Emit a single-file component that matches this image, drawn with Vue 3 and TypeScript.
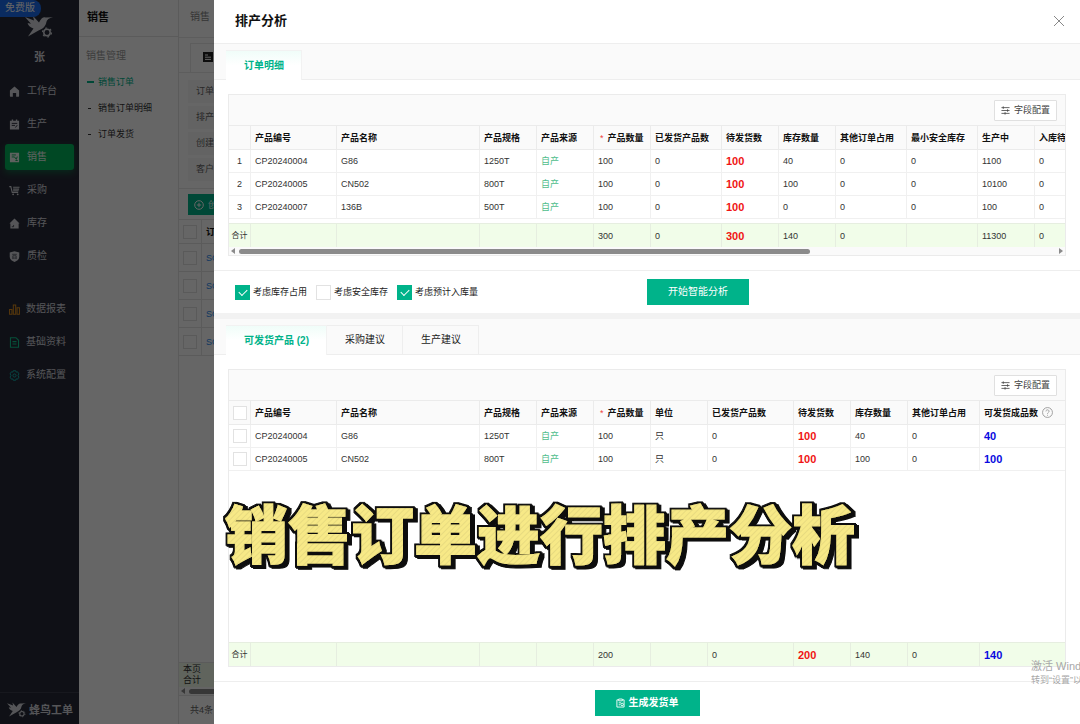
<script setup lang="ts">
import { ref } from 'vue'

interface Column {
  key: string
  label: string
  width?: number
  required?: boolean
  help?: boolean
  tone?: 'red' | 'blue' | 'source'
}
type Row = Record<string, string>

const mainMenu = [
  { label: '工作台', icon: 'home' },
  { label: '生产', icon: 'clip' },
  { label: '销售', icon: 'sale', active: true },
  { label: '采购', icon: 'cart' },
  { label: '库存', icon: 'store' },
  { label: '质检', icon: 'shield' },
]
const toolMenu = [
  { label: '数据报表', icon: 'chart' },
  { label: '基础资料', icon: 'doc' },
  { label: '系统配置', icon: 'gear' },
]
const subMenu = [
  { label: '销售订单', active: true },
  { label: '销售订单明细', active: false },
  { label: '订单发货', active: false },
]
const filters = ['订单', '排产', '创建', '客户']
const orders = ['SO1', 'SO2', 'SO3', 'SO4']

const detailColumns: Column[] = [
  { key: 'code', label: '产品编号', width: 86 },
  { key: 'name', label: '产品名称', width: 143 },
  { key: 'spec', label: '产品规格', width: 57 },
  { key: 'source', label: '产品来源', width: 57, tone: 'source' },
  { key: 'qty', label: '产品数量', width: 57, required: true },
  { key: 'sent', label: '已发货产品数', width: 71 },
  { key: 'wait', label: '待发货数', width: 57, tone: 'red' },
  { key: 'stock', label: '库存数量', width: 57 },
  { key: 'used', label: '其他订单占用', width: 71 },
  { key: 'safe', label: '最小安全库存', width: 71 },
  { key: 'making', label: '生产中', width: 57 },
  { key: 'inbound', label: '入库待检', width: 71 },
]
const detailRows: Row[] = [
  { code: 'CP20240004', name: 'G86', spec: '1250T', source: '自产', qty: '100', sent: '0', wait: '100', stock: '40', used: '0', safe: '0', making: '1100', inbound: '0' },
  { code: 'CP20240005', name: 'CN502', spec: '800T', source: '自产', qty: '100', sent: '0', wait: '100', stock: '100', used: '0', safe: '0', making: '10100', inbound: '0' },
  { code: 'CP20240007', name: '136B', spec: '500T', source: '自产', qty: '100', sent: '0', wait: '100', stock: '0', used: '0', safe: '0', making: '100', inbound: '0' },
]
const detailTotal: Row = { qty: '300', sent: '0', wait: '300', stock: '140', used: '0', making: '11300', inbound: '0' }

const shipColumns: Column[] = [
  { key: 'code', label: '产品编号', width: 86 },
  { key: 'name', label: '产品名称', width: 143 },
  { key: 'spec', label: '产品规格', width: 57 },
  { key: 'source', label: '产品来源', width: 57, tone: 'source' },
  { key: 'qty', label: '产品数量', width: 57, required: true },
  { key: 'unit', label: '单位', width: 57 },
  { key: 'sent', label: '已发货产品数', width: 86 },
  { key: 'wait', label: '待发货数', width: 57, tone: 'red' },
  { key: 'stock', label: '库存数量', width: 57 },
  { key: 'used', label: '其他订单占用', width: 72 },
  { key: 'ready', label: '可发货成品数', help: true, tone: 'blue' },
]
const shipRows: Row[] = [
  { code: 'CP20240004', name: 'G86', spec: '1250T', source: '自产', qty: '100', unit: '只', sent: '0', wait: '100', stock: '40', used: '0', ready: '40' },
  { code: 'CP20240005', name: 'CN502', spec: '800T', source: '自产', qty: '100', unit: '只', sent: '0', wait: '100', stock: '100', used: '0', ready: '100' },
]
const shipTotal: Row = { qty: '200', sent: '0', wait: '200', stock: '140', used: '0', ready: '140' }

const options = ref([
  { label: '考虑库存占用', on: true },
  { label: '考虑安全库存', on: false },
  { label: '考虑预计入库量', on: true },
])
const resultTabs = ['可发货产品 (2)', '采购建议', '生产建议']
const activeTab = ref(0)
</script>

<template>
  <div class="page">
    <svg class="defs" aria-hidden="true">
      <symbol id="bird" viewBox="0 0 28 22">
        <path d="M0 1 9 4.500 8 0l6 6.500C16 2.500 18 .8 20.500 1.400L28 1.200C24 2.200 21.800 3.600 21.400 6 20.800 10 18 13 13.500 14.500L3 20.500 8.500 12.500C5 11.500 3.200 9.500 2.600 7l3.400.8Z" fill="currentColor" />
        <circle cx="22" cy="16.500" r="3.200" fill="none" stroke="currentColor" stroke-width="1.500" />
        <circle cx="22" cy="16.500" r="4.500" fill="none" stroke="currentColor" stroke-width="1.200" stroke-dasharray="2 2.710" />
      </symbol>
      <symbol id="home" viewBox="0 0 12 12"><path d="M6 .5 11 5v6a.6.6 0 0 1-.6.6H7.800V7.500H4.200v4.100H1.600A.6.6 0 0 1 1 11V5Z" fill="currentColor" /></symbol>
      <symbol id="clip" viewBox="0 0 12 12"><path d="M1 1.800h2V.5h1.500v1.300h3V.5H9v1.300h2v9.700H1Z" fill="currentColor" /><path d="M3 4.800h6M3 7h3.500M7 9.300l2-2.600" stroke="#262a37" fill="none" /></symbol>
      <symbol id="sale" viewBox="0 0 12 12"><path d="M1 .8h10v10.400H1Z" fill="currentColor" /><path d="M3 3.200h4.500M3 5.400h3l2 2.600 1-3" stroke="#00a050" fill="none" /><path d="M7 9.300h2.500" stroke="#00a050" /></symbol>
      <symbol id="cart" viewBox="0 0 12 12"><path d="M.3 1.800H2L3.500 8H10M4.500 2.500h7M4.500 4.500H11M4.500 6.300h6" fill="none" stroke="currentColor" stroke-width="1.200" /><circle cx="4.500" cy="10.200" r="1" fill="currentColor" /><circle cx="9.500" cy="10.200" r="1" fill="currentColor" /></symbol>
      <symbol id="store" viewBox="0 0 12 12"><path d="M6 .6 11.500 6H10.500v5.400h-9V6H.5Z" fill="currentColor" /><path d="M3 9.500h2V7.600" stroke="#262a37" stroke-width=".8" fill="none" /></symbol>
      <symbol id="shield" viewBox="0 0 12 12"><path d="M6 .3 11.200 1.700v4.500C11.200 9 9 10.800 6 11.900 3 10.800.8 9 .8 6.200V1.700Z" fill="currentColor" /><path d="M3.500 3.600h5M4.200 5.200h3.600v2.500H4.200zM4.500 7.800l-1 1M7.500 7.800l1 1" stroke="#262a37" stroke-width=".7" fill="none" /></symbol>
      <symbol id="chart" viewBox="0 0 12 12"><path d="M.6 6h2.600v5.200H.6zM4.700 1.200h2.600v10H4.700zM8.800 4h2.600v7.200H8.800z" fill="none" stroke="currentColor" stroke-width="1.100" /></symbol>
      <symbol id="doc" viewBox="0 0 12 12"><path d="M1.600.8h6L10.400 3.600v7.600H1.600zM3.800 5h4.400M3.800 7.600h4.400" fill="none" stroke="currentColor" stroke-width="1.200" /></symbol>
      <symbol id="gear" viewBox="0 0 12 12"><path d="M4.700.8h2.600l.5 1.500 1.600-.3 1.400 2.200L9.900 6l.9 1.800L9.400 10l-1.600-.3-.5 1.500H4.700l-.5-1.500-1.600.3-1.400-2.200L2.100 6l-.9-1.800L2.600 2l1.600.3Z" fill="none" stroke="currentColor" stroke-linejoin="round" /><circle cx="6" cy="6" r="1.700" fill="none" stroke="currentColor" /></symbol>
      <symbol id="sliders" viewBox="0 0 10 10"><path d="M.5 1.800h9M.5 5h9M.5 8.200h9M2.500.4v2.800M7.300 3.600v2.800M4.500 6.800v2.800" fill="none" stroke="currentColor" stroke-width=".9" /></symbol>
    </svg>

    <nav class="sidebar">
      <span class="badge">免费版</span>
      <svg class="logo"><use href="#bird" /></svg>
      <div class="user">张</div>
      <ul class="menu">
        <li v-for="item in mainMenu" :key="item.label">
          <a href="#" class="menu-link" :class="{ active: item.active }">
            <svg class="icon"><use :href="'#' + item.icon" /></svg>{{ item.label }}
          </a>
        </li>
      </ul>
      <ul class="menu tools">
        <li v-for="item in toolMenu" :key="item.label">
          <a href="#" class="menu-link">
            <svg class="icon" :class="item.icon"><use :href="'#' + item.icon" /></svg>{{ item.label }}
          </a>
        </li>
      </ul>
      <div class="brand"><svg class="brand-logo"><use href="#bird" /></svg>蜂鸟工单</div>
    </nav>

    <aside class="submenu">
      <h2>销售</h2>
      <p class="group">销售管理</p>
      <a v-for="item in subMenu" :key="item.label" href="#" :class="{ active: item.active }">{{ item.label }}</a>
    </aside>

    <main class="orders">
      <div class="crumb">销售</div>
      <div class="view-tabs">
        <div class="view-tab">
          <svg class="view-icon" viewBox="0 0 10 10"><path d="M0 0h10v10H0z" fill="#222" /><path d="M2 3h3M2 5.200h6M2 7.400h6" stroke="#fff" /></svg>
        </div>
      </div>
      <div class="filters"><span v-for="f in filters" :key="f">{{ f }}</span></div>
      <div class="actions">
        <button type="button" class="create">
          <svg class="plus" viewBox="0 0 10 10"><circle cx="5" cy="5" r="4.300" /><path d="M5 2.800v4.400M2.800 5h4.400" /></svg>创建
        </button>
      </div>
      <table class="order-table">
        <thead>
          <tr><th class="pick"><input type="checkbox" class="check" aria-label="全选订单" /></th><th>订单</th></tr>
        </thead>
        <tbody>
          <tr v-for="o in orders" :key="o">
            <td class="pick"><input type="checkbox" class="check" :aria-label="o" /></td>
            <td><a href="#">{{ o }}</a></td>
          </tr>
        </tbody>
      </table>
      <div class="order-total"><span>本页<br />合计</span></div>
      <div class="scroll"><i class="arrow left"></i><i class="thumb"></i></div>
      <div class="pager">共4条</div>
    </main>

    <div class="mask"></div>

    <section class="drawer" role="dialog" aria-labelledby="drawer-title">
      <header class="drawer-head">
        <h1 id="drawer-title">排产分析</h1>
        <button type="button" class="close" aria-label="关闭">
          <svg viewBox="0 0 12 12"><path d="M1 1l10 10M11 1 1 11" /></svg>
        </button>
      </header>

      <div class="tabs" role="tablist"><button type="button" role="tab" class="tab active">订单明细</button></div>

      <div class="panel detail">
        <div class="grid-box">
          <div class="toolbar"><button type="button" class="config"><svg><use href="#sliders" /></svg>字段配置</button></div>
          <div class="clip">
            <table class="grid wide">
              <colgroup><col class="lead" /><col v-for="c in detailColumns" :key="c.key" :style="{ width: c.width + 'px' }" /></colgroup>
              <thead>
                <tr>
                  <th></th>
                  <th v-for="c in detailColumns" :key="c.key"><span v-if="c.required" class="star">*</span>{{ c.label }}</th>
                </tr>
              </thead>
              <tbody>
                <tr v-for="(r, i) in detailRows" :key="r.code">
                  <td class="num">{{ i + 1 }}</td>
                  <td v-for="c in detailColumns" :key="c.key" :class="c.tone">{{ r[c.key] }}</td>
                </tr>
              </tbody>
              <tbody class="spacer"><tr><td :colspan="detailColumns.length + 1"></td></tr></tbody>
              <tfoot>
                <tr>
                  <td class="sum">合计</td>
                  <td v-for="c in detailColumns" :key="c.key" :class="c.tone">{{ detailTotal[c.key] }}</td>
                </tr>
              </tfoot>
            </table>
          </div>
          <div class="scroll"><i class="arrow left"></i><div class="track"><i class="thumb"></i></div><i class="arrow right"></i></div>
        </div>
      </div>

      <div class="options">
        <div class="checks">
          <label v-for="o in options" :key="o.label"><input v-model="o.on" type="checkbox" class="check" />{{ o.label }}</label>
        </div>
        <div><button type="button" class="primary">开始智能分析</button></div>
      </div>

      <div class="tabs second" role="tablist">
        <button v-for="(t, i) in resultTabs" :key="t" type="button" role="tab" class="tab" :class="{ active: i === activeTab }" @click="activeTab = i">{{ t }}</button>
      </div>

      <div class="panel result">
        <div class="grid-box grow">
          <div class="toolbar"><button type="button" class="config"><svg><use href="#sliders" /></svg>字段配置</button></div>
          <table class="grid">
            <colgroup><col class="lead" /><col v-for="c in shipColumns" :key="c.key" :style="c.width ? { width: c.width + 'px' } : {}" /></colgroup>
            <thead>
              <tr>
                <th class="num"><input type="checkbox" class="check" aria-label="全选产品" /></th>
                <th v-for="c in shipColumns" :key="c.key"><span v-if="c.required" class="star">*</span>{{ c.label }}<svg v-if="c.help" class="help" viewBox="0 0 12 12"><circle cx="6" cy="6" r="5.400" /><path d="M4.300 4.800C4.300 2.500 7.700 2.600 7.700 4.700 7.700 6 6 6 6 7.400M6 8.500v1" /></svg></th>
              </tr>
            </thead>
            <tbody>
              <tr v-for="r in shipRows" :key="r.code">
                <td class="num"><input type="checkbox" class="check" :aria-label="r.code" /></td>
                <td v-for="c in shipColumns" :key="c.key" :class="c.tone">{{ r[c.key] }}</td>
              </tr>
            </tbody>
          </table>
          <div class="blank">
            <svg class="caption" viewBox="0 0 640 84" role="img" aria-label="销售订单进行排产分析">
              <defs>
                <pattern id="hatch" width="4" height="4" patternUnits="userSpaceOnUse" patternTransform="rotate(45)">
                  <path d="M0 0h4v4H0z" fill="#f7e987" /><path d="M0 0h1v4H0z" fill="#e8db80" />
                </pattern>
                <filter id="outline" x="-2%" y="-20%" width="104%" height="140%">
                  <feMorphology in="SourceAlpha" operator="dilate" radius="1.500" result="edge" />
                  <feOffset in="edge" dx="1" dy="1" result="s1" />
                  <feOffset in="edge" dx="3" dy="2" result="s2" />
                  <feMerge result="dark"><feMergeNode in="s2" /><feMergeNode in="s1" /><feMergeNode in="edge" /></feMerge>
                  <feFlood flood-color="#0c0c0c" />
                  <feComposite in2="dark" operator="in" result="ink" />
                  <feMerge><feMergeNode in="ink" /><feMergeNode in="SourceGraphic" /></feMerge>
                </filter>
              </defs>
              <text x="4" y="64" filter="url(#outline)">销售订单进行排产分析</text>
            </svg>
          </div>
          <table class="grid">
            <colgroup><col class="lead" /><col v-for="c in shipColumns" :key="c.key" :style="c.width ? { width: c.width + 'px' } : {}" /></colgroup>
            <tfoot>
              <tr>
                <td class="sum">合计</td>
                <td v-for="c in shipColumns" :key="c.key" :class="c.tone">{{ shipTotal[c.key] }}</td>
              </tr>
            </tfoot>
          </table>
        </div>
      </div>

      <footer class="drawer-foot">
        <button type="button" class="primary generate">
          <svg viewBox="0 0 10 10"><path d="M3 1.500H1v8h8v-8H7M3 .6h4v2H3zM3 4.800h2.500M3 7h1.500" /><circle cx="6.800" cy="6.600" r="1.400" /></svg>生成发货单
        </button>
      </footer>

      <div class="watermark"><p>激活 Windows</p><p class="small">转到“设置”以激活 Windows。</p></div>
    </section>
  </div>
</template>

<style>
body {
  margin: 0;
}
</style>

<style scoped>
.page {
  position: relative;
  display: grid;
  grid-template-columns: 79px 100px 1fr;
  min-height: 100vh;
  overflow: hidden;
  background: #fff;
  color: #333;
  font-family: "Liberation Sans", "Noto Sans CJK SC", sans-serif;
  font-size: 9px;
  line-height: 14px;
}
.page * {
  box-sizing: border-box;
}
.defs {
  position: absolute;
  width: 0;
  height: 0;
}
button {
  border: 0;
  padding: 0;
  margin: 0;
  background: none;
  color: inherit;
  font: inherit;
  white-space: nowrap;
}
a {
  color: inherit;
  text-decoration: none;
}
h1, h2, p, ul {
  margin: 0;
  padding: 0;
}
ul {
  list-style: none;
}

/* left navigation */
.sidebar {
  position: relative;
  display: flex;
  flex-direction: column;
  background: #262a37;
  color: #d4d5dc;
  font-size: 10px;
}
.badge {
  position: absolute;
  left: 0;
  top: 0;
  width: 41px;
  height: 17px;
  padding-left: 5px;
  border-radius: 0 8px 8px 0;
  background: #1a6cf0;
  color: #fff;
  line-height: 16px;
}
.logo {
  width: 28px;
  height: 22px;
  margin: 16px 0 0 25px;
  flex: none;
}
.user {
  height: 36px;
  padding-top: 12px;
  text-align: center;
  font-size: 11px;
  font-weight: bold;
}
.menu {
  padding: 0 5px;
  display: grid;
  gap: 7px;
  margin-top: 4px;
}
.menu.tools {
  margin-top: 27px;
}
.menu-link {
  display: flex;
  align-items: center;
  gap: 7px;
  height: 26px;
  padding-left: 4px;
  border-radius: 3px;
  white-space: nowrap;
}
.tools .menu-link {
  gap: 6px;
}
.menu-link.active {
  background: #00b45a;
  color: #e8f5ee;
  box-shadow: 0 3px 6px #00b45a66;
}
.icon {
  width: 11px;
  height: 11px;
  flex: none;
}
.icon.chart {
  color: #d98a1e;
}
.icon.doc {
  color: #10c590;
}
.icon.gear {
  color: #10b5b0;
}
.brand {
  display: flex;
  align-items: center;
  gap: 3px;
  height: 32px;
  margin-top: auto;
  padding: 3px 0 0 7px;
  border-top: 1px solid #3a3e4c;
  font-size: 11px;
  font-weight: bold;
  white-space: nowrap;
}
.brand-logo {
  width: 19px;
  height: 16px;
  flex: none;
}

/* second level navigation */
.submenu {
  display: flex;
  flex-direction: column;
  border-right: 1px solid #e4e4e4;
}
.submenu h2 {
  height: 37px;
  padding-left: 8px;
  border-bottom: 1px solid #e4e4e4;
  color: #111;
  font-size: 11px;
  line-height: 35px;
}
.group {
  height: 32px;
  padding: 12px 0 0 7px;
  color: #999;
  font-size: 10px;
}
.submenu a {
  display: flex;
  align-items: center;
  gap: 7px;
  height: 26px;
  padding-left: 9px;
  white-space: nowrap;
}
.submenu a::before {
  content: "";
  width: 3px;
  height: 1px;
  background: #333;
}
.submenu a.active {
  gap: 4px;
  padding-left: 8px;
  color: #00b38a;
}
.submenu a.active::before {
  width: 7px;
  height: 2px;
  background: #00b38a;
}

/* order list behind the drawer */
.orders {
  display: flex;
  flex-direction: column;
  min-width: 0;
}
.crumb {
  height: 38px;
  padding-left: 11px;
  border-bottom: 1px solid #e8e8e8;
  color: #888;
  font-size: 10px;
  line-height: 34px;
}
.view-tabs {
  padding: 5px 11px 0;
  border-bottom: 1px solid #e8e8e8;
}
.view-tab {
  height: 29px;
  padding: 8px 12px;
  border: 1px solid #e8e8e8;
  border-bottom: 0;
}
.view-icon {
  display: block;
  width: 10px;
  height: 10px;
}
.filters {
  display: grid;
  gap: 3px;
  padding: 7px 9px;
  border-bottom: 1px solid #e8e8e8;
}
.filters span {
  height: 23px;
  padding: 4px 8px;
  background: #f8f8f8;
  color: #666;
}
.actions {
  padding: 5px 9px 4px;
}
.create {
  display: flex;
  align-items: center;
  gap: 4px;
  height: 21px;
  padding: 0 6px;
  background: #00b38a;
  color: #fff;
}
.plus {
  width: 10px;
  height: 10px;
  fill: none;
  stroke: currentColor;
}
.order-table {
  border-spacing: 0;
  border-top: 1px solid #e4e4e4;
}
.order-table th, .order-table td {
  height: 28px;
  padding: 0 4px;
  border-bottom: 1px solid #e4e4e4;
  text-align: left;
}
.order-table th {
  height: 24px;
  color: #111;
}
.order-table a {
  color: #2d8cf0;
}
.order-table .pick {
  width: 23px;
  border-right: 1px solid #e4e4e4;
}
.order-total {
  margin-top: auto;
  padding: 1px 4px;
  background: #f0fbe8;
  border-top: 1px solid #e4e4e4;
  line-height: 11px;
}
.orders .thumb {
  width: 300px;
}
.pager {
  height: 29px;
  padding-left: 11px;
  border-top: 1px solid #e4e4e4;
  color: #666;
  line-height: 28px;
}

.mask {
  position: absolute;
  inset: 0;
  background: rgba(0, 0, 0, 0.6);
}

/* drawer */
.drawer {
  position: absolute;
  inset: 0 0 0 214px;
  display: flex;
  flex-direction: column;
  overflow: hidden;
  background: #fff;
}
.drawer-head {
  display: flex;
  align-items: center;
  justify-content: space-between;
  height: 44px;
  padding: 0 15px 2px 21px;
  border-bottom: 1px solid #eee;
}
.drawer-head h1 {
  color: #111;
  font-size: 13px;
  line-height: 20px;
}
.close svg {
  display: block;
  width: 12px;
  height: 12px;
  fill: none;
  stroke: #888;
}
.tabs {
  display: flex;
  align-items: flex-end;
  height: 36px;
  padding-left: 12px;
  border-bottom: 1px solid #eee;
  background: #fafafa;
}
.tabs.second {
  box-sizing: content-box;
  height: 35px;
  border-top: 6px solid #f2f2f2;
}
.tab {
  height: 29px;
  padding: 0 17px 0 18px;
  border: solid #eee;
  border-width: 1px 1px 0 0;
  color: #222;
  font-size: 10px;
  line-height: 28px;
}
.tab.active {
  height: 30px;
  margin-bottom: -1px;
  border-color: #f2f2f2;
  background: linear-gradient(#f0fdf9, #fff 50%);
  color: #00b38a;
  font-weight: bold;
}
.panel {
  padding: 14px;
}
.detail {
  border-bottom: 1px solid #eee;
}
.result {
  display: flex;
  flex: 1;
  flex-direction: column;
  min-height: 0;
}
.grid-box {
  border: 1px solid #ebebeb;
}
.grid-box.grow {
  display: flex;
  flex: 1;
  flex-direction: column;
}
.toolbar {
  display: flex;
  align-items: center;
  justify-content: flex-end;
  height: 31px;
  padding-right: 8px;
  border-bottom: 1px solid #ebebeb;
  background: #fafafa;
}
.config {
  display: flex;
  align-items: center;
  justify-content: center;
  gap: 4px;
  width: 63px;
  height: 21px;
  border: 1px solid #e0e0e0;
  border-radius: 1px;
  background: #fff;
  color: #444;
}
.config svg {
  width: 9px;
  height: 9px;
}
.clip {
  overflow: hidden;
}
.grid {
  width: 100%;
  border-spacing: 0;
  table-layout: fixed;
}
.grid.wide {
  width: 877px;
}
.grid .lead {
  width: 22px;
}
.grid th, .grid td {
  height: 23px;
  padding: 0 4px;
  border: solid #f0f0f0;
  border-width: 0 1px 1px 0;
  text-align: left;
  white-space: nowrap;
}
.grid th:last-child, .grid td:last-child {
  border-right: 0;
}
.grid th {
  height: 24px;
  border-color: #ebebeb;
  background: #fafafa;
  color: #111;
}
.grid .num, .grid .sum {
  padding: 0;
  text-align: center;
}
.grid .sum {
  font-size: 8px;
}
.grid .spacer td {
  height: 4px;
  border: 0;
}
.grid tfoot td {
  height: 24px;
  border-width: 1px 1px 0 0;
  border-color: #e6eee0;
  background: #f1fde9;
}
.grid .red, .grid .blue {
  color: #f01414;
  font-size: 11px;
  font-weight: bold;
}
.grid .blue {
  color: #0a0ae0;
}
.grid tbody .source {
  color: #4fbd8c;
}
.star {
  margin: 0 4px 0 2px;
  color: #f04040;
  font-weight: normal;
}
.help {
  width: 11px;
  height: 11px;
  margin-left: 4px;
  vertical-align: -2px;
  fill: none;
  stroke: #999;
}
.scroll {
  display: flex;
  align-items: center;
  gap: 4px;
  height: 8px;
  padding: 0 2px;
  overflow: hidden;
  background: #fafafa;
}
.track {
  flex: 1;
}
.thumb {
  display: block;
  width: 70%;
  height: 5px;
  border-radius: 3px;
  background: #8b8b8b;
}
.arrow {
  border: 3px solid transparent;
}
.arrow.left {
  border-right: 4px solid #8b8b8b;
  border-left: 0;
}
.arrow.right {
  border-left: 4px solid #8b8b8b;
  border-right: 0;
}
.check {
  display: block;
  width: 14px;
  height: 14px;
  margin: 0 auto;
  appearance: none;
  border: 1px solid #e2e2e2;
  background: #fff;
}
.check:checked {
  border-color: #00b38a;
  background: #00b38a;
}
.check:checked::after {
  content: "";
  display: block;
  width: 7px;
  height: 4px;
  margin: 3px 0 0 3px;
  border: solid #fff;
  border-width: 0 0 1px 1px;
  transform: rotate(-45deg);
}
.options {
  display: grid;
  grid-template-columns: 1fr 1fr;
  align-items: center;
  height: 42px;
}
.checks {
  display: flex;
  gap: 9px;
  padding-left: 21px;
  color: #222;
}
.checks label {
  display: flex;
  align-items: center;
  gap: 3px;
  white-space: nowrap;
}
.checks .check {
  width: 15px;
  height: 15px;
}
.primary {
  height: 26px;
  padding: 0 21px;
  background: #00b38a;
  color: #fff;
  font-size: 10px;
}
.blank {
  position: relative;
  flex: 1;
}
.caption {
  position: absolute;
  left: -8px;
  top: 23px;
  width: 640px;
  height: 84px;
}
.caption text {
  fill: url(#hatch);
  stroke: url(#hatch);
  stroke-width: 1px;
  font-family: "Noto Sans CJK SC", sans-serif;
  font-size: 63px;
  font-weight: 900;
}
.drawer-foot {
  display: flex;
  align-items: center;
  justify-content: center;
  height: 43px;
  border-top: 1px solid #eee;
}
.generate {
  display: flex;
  align-items: center;
  gap: 4px;
  font-weight: bold;
}
.generate svg {
  width: 9px;
  height: 10px;
  fill: none;
  stroke: currentColor;
}
.watermark {
  position: absolute;
  right: 0;
  bottom: 37px;
  width: 49px;
  overflow: hidden;
  color: #a8a8a8;
  font-size: 11px;
  white-space: nowrap;
}
.watermark .small {
  font-size: 9px;
}
</style>
